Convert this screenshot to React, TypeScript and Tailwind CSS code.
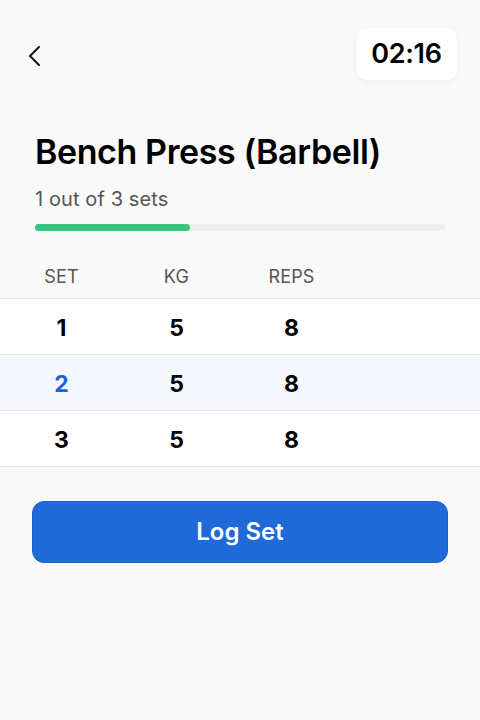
import React from "react";

const rows = [
  { set: 1, kg: 5, reps: 8, active: false },
  { set: 2, kg: 5, reps: 8, active: true },
  { set: 3, kg: 5, reps: 8, active: false },
];

export default function App() {
  return (
    <div
      className="w-[480px] h-[720px] bg-[#fafafa] text-black"
      style={{ fontFamily: "Inter, 'Noto Sans', sans-serif" }}
    >
      <div className="flex items-center justify-between pl-[26px] pr-[23px] pt-[28px]">
        <svg width="18" height="22" viewBox="0 0 18 22" fill="none" className="mt-[4px]">
          <path d="M13 2 L4 11 L13 20" stroke="#111" strokeWidth="2" strokeLinecap="round" strokeLinejoin="round" />
        </svg>
        <div className="h-[52px] w-[101px] rounded-[10px] bg-white shadow-[0_2px_6px_rgba(0,0,0,0.06)] flex items-center justify-center text-[27px] font-semibold tracking-[-0.3px]">
          02:16
        </div>
      </div>

      <div className="px-[35px] pt-[52px]">
        <h1 className="text-[34px] leading-[40px] font-semibold tracking-[-0.4px]">Bench Press (Barbell)</h1>
        <p className="mt-[15px] text-[20px] leading-[24px] text-[#555] tracking-[0.1px]">1 out of 3 sets</p>
        <div className="mt-[13px] h-[7px] w-[410px] rounded-full bg-[#efefef]">
          <div className="h-full w-[155px] rounded-full bg-[#3ec47f]" />
        </div>
      </div>

      <div className="mt-[35px]">
        <div className="grid grid-cols-[115px_115px_115px] pl-[4px] pb-[10px] text-[18px] leading-[22px] text-[#555] tracking-[0.2px]">
          <div className="text-center">SET</div>
          <div className="text-center">KG</div>
          <div className="text-center">REPS</div>
        </div>
        <div className="border-t border-[#e4e4e7]">
          {rows.map((r) => (
            <div
              key={r.set}
              className={`grid grid-cols-[115px_115px_115px] pl-[4px] pt-[3px] h-[56px] items-center border-b border-[#e4e4e7] text-[23px] font-bold ${
                r.active ? "bg-[#f4f7fd]" : "bg-white"
              }`}
            >
              <div className={`text-center ${r.active ? "text-[#1e63d6]" : ""}`}>{r.set}</div>
              <div className="text-center">{r.kg}</div>
              <div className="text-center">{r.reps}</div>
            </div>
          ))}
        </div>
      </div>

      <div className="px-[32px] pt-[34px]">
        <button className="w-full h-[62px] rounded-[12px] bg-[#1f69d8] border border-[#1d5fc7] text-white text-[24px] font-semibold flex items-center justify-center">
          Log Set
        </button>
      </div>
    </div>
  );
}
